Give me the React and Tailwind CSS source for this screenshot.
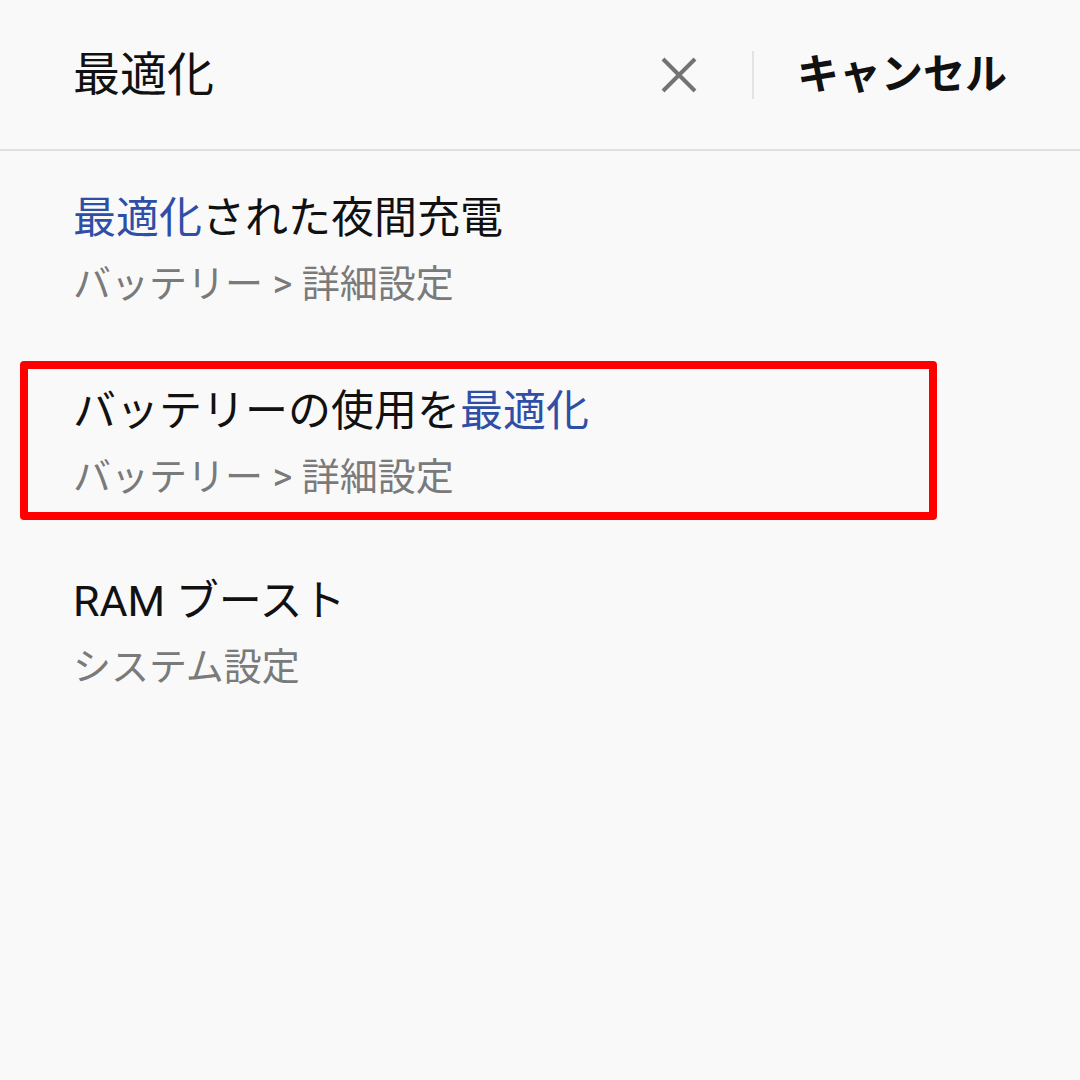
export default function App() {
  const font = "font-['Roboto','Noto_Sans_CJK_JP',sans-serif]";
  return (
    <div className={`w-[1080px] h-[1080px] bg-[#f9f9f9] ${font} overflow-hidden`}>
      <div className="h-[151px] border-b-2 border-[#e0e0e0] flex items-center pl-[73px] pr-[73px]">
        <div className="flex-1 text-[47px] leading-[56px] text-[#111]">最適化</div>
        <svg width="36" height="36" viewBox="0 0 36 36" className="shrink-0">
          <path d="M2 2 L34 34 M34 2 L2 34" stroke="#737373" strokeWidth="4" strokeLinecap="butt" />
        </svg>
        <div className="ml-[55px] w-[2px] h-[48px] bg-[#e3e3e3]" />
        <div className="ml-[43px] text-[42px] leading-[56px] font-bold text-[#111]">キャンセル</div>
      </div>

      <div className="pt-[39px]">
        <div className="pl-[73px]">
          <div className="text-[43px] leading-[56px] text-[#111]">
            <span className="text-[#2f4fa6]">最適化</span>された夜間充電
          </div>
          <div className="mt-[13px] text-[38px] leading-[50px] text-[#7a7a7a]">バッテリー &gt; 詳細設定</div>
        </div>

        <div className="mt-[52px] ml-[20px] w-[917px] border-[8px] border-[#ff0000] rounded-[4px] pl-[45px] pt-[14px] pb-[10px]">
          <div className="text-[43px] leading-[56px] text-[#111]">
            バッテリーの使用を<span className="text-[#2f4fa6]">最適化</span>
          </div>
          <div className="mt-[13px] text-[38px] leading-[50px] text-[#7a7a7a]">バッテリー &gt; 詳細設定</div>
        </div>

        <div className="mt-[53px] pl-[73px]">
          <div className="text-[43px] leading-[56px] text-[#111]">RAM ブースト</div>
          <div className="mt-[13px] text-[38px] leading-[50px] text-[#7a7a7a]">システム設定</div>
        </div>
      </div>
    </div>
  );
}
